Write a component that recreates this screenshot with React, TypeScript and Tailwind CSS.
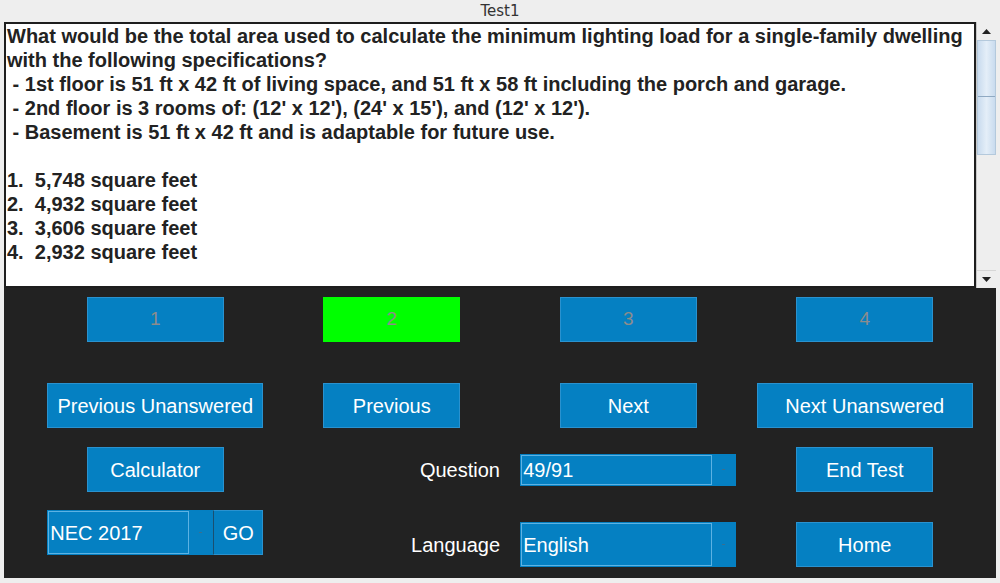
import type { ReactNode } from 'react';

const FONT = { fontFamily: '"Liberation Sans", Arial, sans-serif' };

function Btn({ children, className = '' }: { children: ReactNode; className?: string }) {
  return (
    <button
      type="button"
      className={`h-[45px] border border-[#2a92cf] bg-[#0580c2] text-[20px] text-white ${className}`}
    >
      {children}
    </button>
  );
}

function AnswerBtn({ label, active }: { label: string; active?: boolean }) {
  return (
    <button
      type="button"
      className={`h-[45px] w-[137px] justify-self-center border text-[19px] text-[#8c8c8c] ${
        active ? 'border-[#00ff00] bg-[#00ff00]' : 'border-[#2a92cf] bg-[#0580c2]'
      }`}
    >
      {label}
    </button>
  );
}

function Combo({ value, className = '' }: { value: string; className?: string }) {
  return (
    <div className={`flex border border-[#0580c2] bg-[#0580c2] ${className}`}>
      <div className="flex flex-1 items-center border border-[#5cb2e3] pl-[1px] text-[20px] text-white">
        {value}
      </div>
      <div className="flex w-[23px] items-center justify-center">
        <span className="h-[1px] w-[3px] bg-[#3a6f90]" />
      </div>
    </div>
  );
}

function ScrollBar() {
  return (
    <div className="flex w-[20px] flex-col border-l border-[#c8c8c8] bg-[#eeeeee]">
      <div className="flex h-[18px] items-center justify-center">
        <svg width="9" height="5" viewBox="0 0 9 5">
          <path d="M0 5 L4.5 0 L9 5 Z" fill="#222" />
        </svg>
      </div>
      <div className="flex h-[115px] flex-col border border-[#b4c9dc] bg-gradient-to-r from-[#c9dbee] via-[#e4eef8] to-[#c9dbee]">
        <div className="h-[56px] border-b border-[#8fa9c2]" />
      </div>
      <div className="flex-1" />
      <div className="flex h-[18px] items-center justify-center border-t border-[#d6d6d6]">
        <svg width="9" height="5" viewBox="0 0 9 5">
          <path d="M0 0 L4.5 5 L9 0 Z" fill="#222" />
        </svg>
      </div>
    </div>
  );
}

export default function App() {
  const question = [
    'What would be the total area used to calculate the minimum lighting load for a single-family dwelling',
    'with the following specifications?',
    ' - 1st floor is 51 ft x 42 ft of living space, and 51 ft x 58 ft including the porch and garage.',
    " - 2nd floor is 3 rooms of: (12' x 12'), (24' x 15'), and (12' x 12').",
    ' - Basement is 51 ft x 42 ft and is adaptable for future use.',
    '',
    '1.  5,748 square feet',
    '2.  4,932 square feet',
    '3.  3,606 square feet',
    '4.  2,932 square feet',
  ];

  return (
    <div className="flex h-[583px] w-[1000px] flex-col bg-[#eeeeee]" style={FONT}>
      {/* window title */}
      <div
        className="flex h-[22px] items-center justify-center text-[15px] text-[#333]"
        style={{ fontFamily: '"DejaVu Sans", sans-serif' }}
      >
        Test1
      </div>

      <div className="mx-[4px] flex h-[266px]">
        <div className="flex-1 overflow-hidden border-2 border-[#1e1e1e] bg-white pl-[1px]">
          {question.map((line, i) => (
            <div
              key={i}
              className="h-[24px] whitespace-pre text-[20px] font-bold leading-[24px] text-[#222]"
            >
              {line}
            </div>
          ))}
        </div>
        <ScrollBar />
      </div>

      {/* control panel */}
      <div className="mx-[4px] flex h-[290px] flex-col bg-[#222222] pl-[33px] pt-[9px]">
        <div className="grid grid-cols-[repeat(4,236.5px)]">
          <AnswerBtn label="1" />
          <AnswerBtn label="2" active />
          <AnswerBtn label="3" />
          <AnswerBtn label="4" />
        </div>

        <div className="mt-[41px] grid grid-cols-[repeat(4,236.5px)]">
          <Btn className="w-[216px] justify-self-center">Previous Unanswered</Btn>
          <Btn className="w-[137px] justify-self-center">Previous</Btn>
          <Btn className="w-[137px] justify-self-center">Next</Btn>
          <Btn className="w-[216px] justify-self-center">Next Unanswered</Btn>
        </div>

        <div className="mt-[19px] grid grid-cols-[repeat(4,236.5px)] items-center">
          <Btn className="w-[137px] justify-self-center">Calculator</Btn>
          <div className="pr-[10px] text-right text-[20px] text-white">Question</div>
          <Combo value="49/91" className="h-[32px] w-[216px] justify-self-center" />
          <Btn className="w-[137px] justify-self-center">End Test</Btn>
        </div>

        <div className="mt-[18px] grid h-[57px] grid-cols-[repeat(4,236.5px)]">
          <div className="flex h-[45px] w-[216px] self-start justify-self-center">
            <Combo value="NEC 2017" className="h-[45px] w-[166px]" />
            <Btn className="w-[50px] border-l-[#1a4f70]">GO</Btn>
          </div>
          <div className="flex h-[45px] items-center justify-end self-end pr-[10px] text-[20px] text-white">
            Language
          </div>
          <Combo value="English" className="h-[45px] w-[216px] self-end justify-self-center" />
          <Btn className="w-[137px] self-end justify-self-center">Home</Btn>
        </div>
      </div>
    </div>
  );
}
